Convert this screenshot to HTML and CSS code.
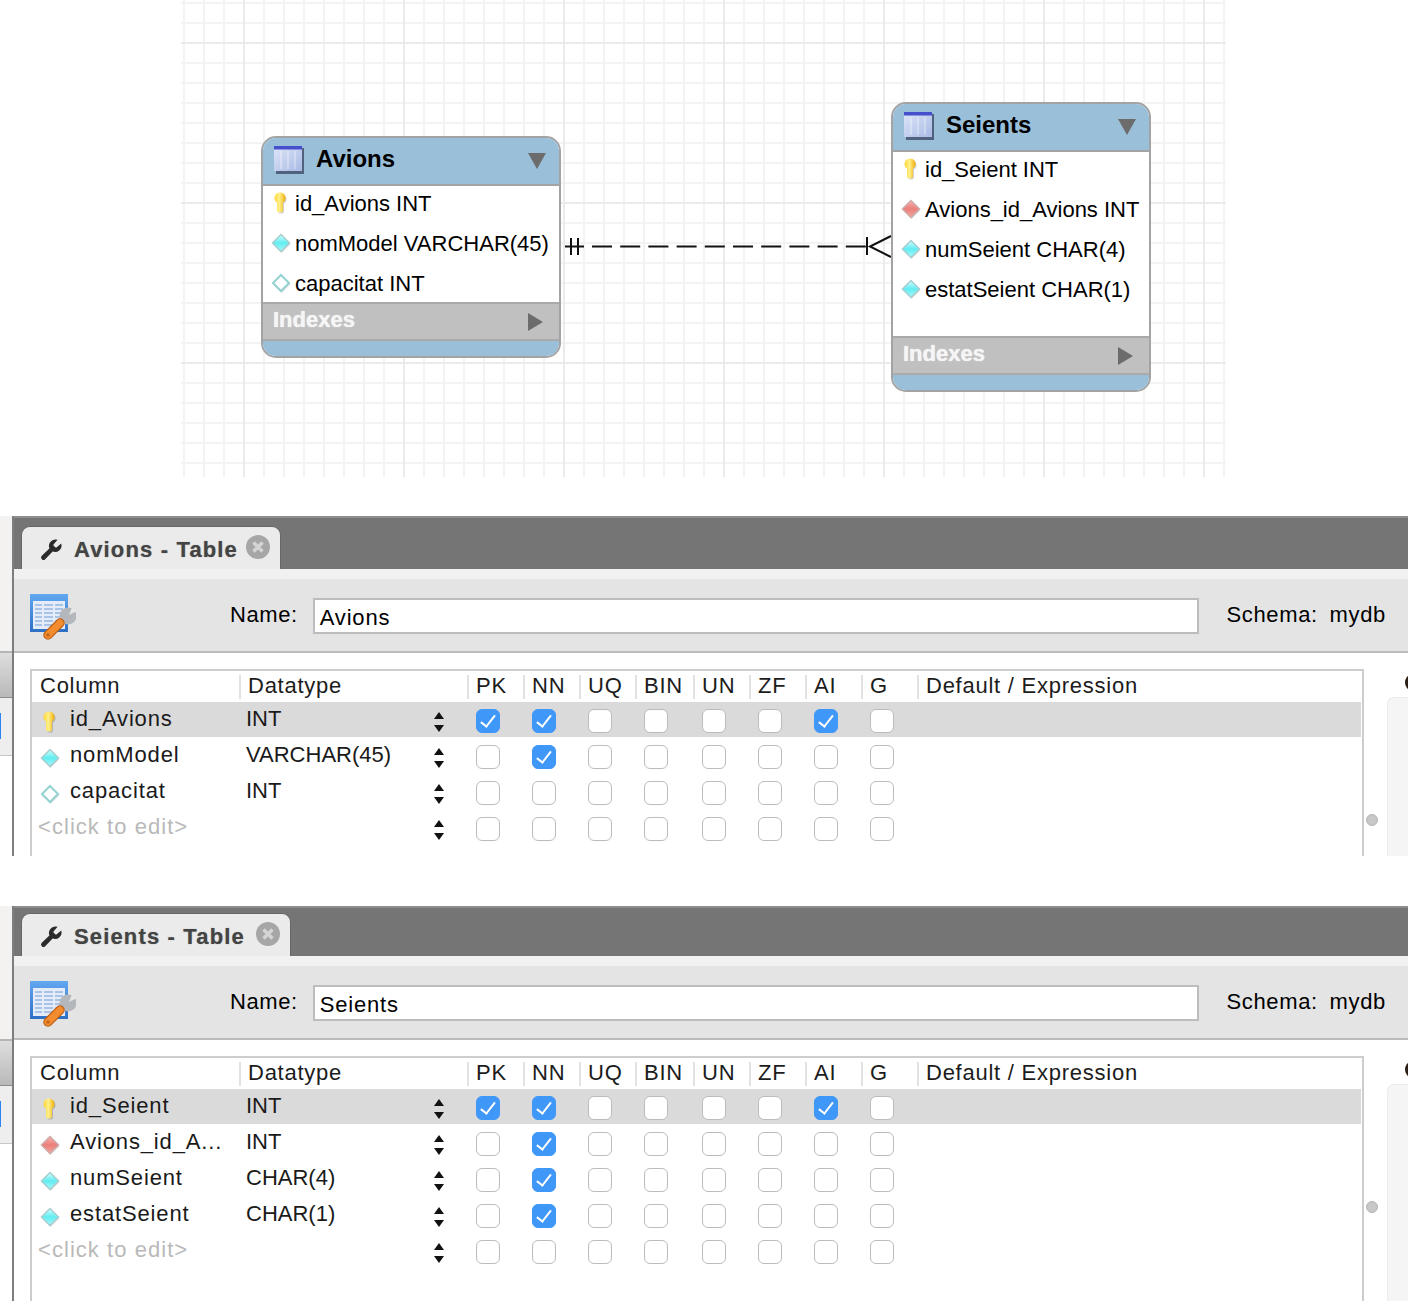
FILE: index.html
```html
<!DOCTYPE html>
<html lang="en">
<head>
    <meta charset="UTF-8">
    <title>MySQL Workbench - Avions / Seients</title>
    <link rel="stylesheet" href="styles.css">
</head>
<body>
    <!-- shared icons -->
    <svg class="defs" width="0" height="0">
        <defs>
            <linearGradient id="key-fill" x1="0" y1="0" x2="1" y2="0">
                <stop offset="0" stop-color="#ffd63c"/>
                <stop offset=".45" stop-color="#fff08a"/>
                <stop offset="1" stop-color="#f0ae0a"/>
            </linearGradient>
            <linearGradient id="col-fill" x1="0" y1="0" x2="0" y2="1">
                <stop offset="0" stop-color="#d4ffff"/>
                <stop offset=".5" stop-color="#62ecf0"/>
                <stop offset="1" stop-color="#a8fbfb"/>
            </linearGradient>
            <linearGradient id="fk-fill" x1="0" y1="0" x2="0" y2="1">
                <stop offset="0" stop-color="#f9b4ae"/>
                <stop offset=".5" stop-color="#ea7f7a"/>
                <stop offset="1" stop-color="#f6a8a2"/>
            </linearGradient>
            <linearGradient id="er-table-fill" x1="0" y1="0" x2="1" y2="1">
                <stop offset="0" stop-color="#dfe6f8"/>
                <stop offset="1" stop-color="#a7b9e4"/>
            </linearGradient>
            <linearGradient id="tool-blue" x1="0" y1="0" x2="0" y2="1">
                <stop offset="0" stop-color="#62a8f0"/>
                <stop offset="1" stop-color="#2d6fc4"/>
            </linearGradient>
            <symbol id="i-key" viewBox="-1 0 20 22">
                <path fill="#000" opacity=".18" d="M9 1.5a5.5 5.5 0 0 1 3 10.1V20l-1.5 1.5h-3L6 20v-8.4A5.5 5.5 0 0 1 9 1.5z"/>
                <path fill="url(#key-fill)" d="M8 .5a5.5 5.5 0 0 1 3 10.1V19l-1.5 1.5h-3L5 19v-8.4A5.5 5.5 0 0 1 8 .5z"/>
            </symbol>
            <symbol id="i-col" viewBox="0 0 20 20">
                <polygon points="10.6,2.4 19.4,11.2 10.6,20 1.8,11.2" fill="#000" opacity=".14"/>
                <polygon points="10,1.4 18.6,10 10,18.6 1.4,10" fill="url(#col-fill)" stroke="#a8cdd0" stroke-width="1.4"/>
            </symbol>
            <symbol id="i-col-empty" viewBox="0 0 20 20">
                <polygon points="10.6,2.4 19.4,11.2 10.6,20 1.8,11.2" fill="#000" opacity=".14"/>
                <polygon points="10,2 18,10 10,18 2,10" fill="#fff" stroke="#93d2d2" stroke-width="2"/>
            </symbol>
            <symbol id="i-fk" viewBox="0 0 20 20">
                <polygon points="10.6,2.4 19.4,11.2 10.6,20 1.8,11.2" fill="#000" opacity=".14"/>
                <polygon points="10,1.4 18.6,10 10,18.6 1.4,10" fill="url(#fk-fill)" stroke="#cfaaaa" stroke-width="1.4"/>
            </symbol>
            <symbol id="i-er-table" viewBox="0 0 30 28">
                <rect x="2" y="2" width="28" height="26" fill="#51627f"/>
                <rect x="0" y="0" width="28" height="25" fill="url(#er-table-fill)"/>
                <rect x="0" y="0" width="28" height="3.5" fill="#4650cc"/>
                <path d="M7 5v18M14 5v18M21 5v18" stroke="#fff" stroke-opacity=".4" stroke-width="1.5"/>
            </symbol>
            <symbol id="i-wrench" viewBox="0 0 24 24">
                <path fill="#2b2b2b" d="M14.7 6.3a1 1 0 0 0 0 1.4l1.6 1.6a1 1 0 0 0 1.4 0l4.5-3.9a6.6 6.6 0 0 1-8.6 8.2l-7.4 7.6a2.4 2.4 0 0 1-3.4-3.4l7.6-7.4a6.6 6.6 0 0 1 8.2-8.6l-3.9 4.5z"/>
            </symbol>
            <symbol id="i-close" viewBox="0 0 24 24">
                <circle cx="12" cy="12" r="12" fill="#a6a6a6"/>
                <path d="M7.5 7.5l9 9M16.5 7.5l-9 9" stroke="#d4d4d4" stroke-width="3.6"/>
            </symbol>
            <symbol id="i-tool" viewBox="0 0 46 46">
                <rect x="0" y="0" width="38" height="38" fill="url(#tool-blue)"/>
                <rect x="3" y="7" width="32" height="28" fill="#e4ecf9"/>
                <path d="M5 11h28M5 15h28M5 19h28M5 23h28M5 27h28M5 31h28" stroke="#a9c3e6" stroke-width="2"/>
                <path d="M13 7v28M24 7v28" stroke="#e4ecf9" stroke-width="2"/>
                <circle cx="38" cy="22" r="8.5" fill="#b4b7bb"/>
                <polygon points="39,21 42,13.5 46,17.5" fill="#e8e8e8"/>
                <path d="M18 41L30 29" stroke="#bd5f16" stroke-width="9.5" stroke-linecap="round"/>
                <path d="M18 41L30 29" stroke="#f28c2e" stroke-width="7" stroke-linecap="round"/>
                <circle cx="18" cy="41" r="1.8" fill="#c4651b"/>
            </symbol>
        </defs>
    </svg>

    <!-- EER diagram -->
    <div class="canvas">
        <svg class="relation" viewBox="181 0 1045 477">
            <path d="M565 246.5h19M571 238v17M578 238v17" stroke="#111" stroke-width="2" fill="none"/>
            <path d="M592 246.5H866" stroke="#111" stroke-width="2" stroke-dasharray="20 8.2" fill="none"/>
            <path d="M867 237v18M891 236L870 246.5L891 257" stroke="#111" stroke-width="2" fill="none"/>
        </svg>

        <div class="er-table er-avions">
            <div class="er-head">
                <svg class="er-icon"><use href="#i-er-table"/></svg>
                <span class="er-title">Avions</span>
                <span class="arrow-down"></span>
            </div>
            <div class="er-body">
                <div class="er-row"><svg class="er-col-icon"><use href="#i-key"/></svg>id_Avions INT</div>
                <div class="er-row"><svg class="er-col-icon"><use href="#i-col"/></svg>nomModel VARCHAR(45)</div>
                <div class="er-row"><svg class="er-col-icon"><use href="#i-col-empty"/></svg>capacitat INT</div>
            </div>
            <div class="er-indexes"><span>Indexes</span><span class="arrow-right"></span></div>
            <div class="er-foot"></div>
        </div>

        <div class="er-table er-seients">
            <div class="er-head">
                <svg class="er-icon"><use href="#i-er-table"/></svg>
                <span class="er-title">Seients</span>
                <span class="arrow-down"></span>
            </div>
            <div class="er-body">
                <div class="er-row"><svg class="er-col-icon"><use href="#i-key"/></svg>id_Seient INT</div>
                <div class="er-row"><svg class="er-col-icon"><use href="#i-fk"/></svg>Avions_id_Avions INT</div>
                <div class="er-row"><svg class="er-col-icon"><use href="#i-col"/></svg>numSeient CHAR(4)</div>
                <div class="er-row"><svg class="er-col-icon"><use href="#i-col"/></svg>estatSeient CHAR(1)</div>
            </div>
            <div class="er-indexes"><span>Indexes</span><span class="arrow-right"></span></div>
            <div class="er-foot"></div>
        </div>
    </div>

    <!-- Avions table editor -->
    <div class="panel panel-avions">
        <div class="rail">
            <div class="rail-top"></div>
            <div class="rail-grey"></div>
            <div class="rail-item"><span class="rail-blue"></span></div>
        </div>
        <div class="main">
            <div class="strip">
                <div class="tab">
                    <svg class="tab-wrench"><use href="#i-wrench"/></svg>
                    <span class="tab-title">Avions - Table</span>
                    <svg class="tab-close"><use href="#i-close"/></svg>
                </div>
            </div>
            <div class="toolbar">
                <svg class="tool-icon"><use href="#i-tool"/></svg>
                <span class="name-label">Name:</span>
                <div class="name-input">Avions</div>
                <span class="schema">Schema: <span class="schema-name">mydb</span></span>
            </div>
            <div class="content">
                <div class="grid-box">
                    <div class="cols grid-head">
                        <div class="th">Column</div><div class="th">Datatype</div><div class="th">PK</div><div class="th">NN</div><div class="th">UQ</div><div class="th">BIN</div><div class="th">UN</div><div class="th">ZF</div><div class="th">AI</div><div class="th">G</div><div class="th">Default / Expression</div>
                    </div>
                    <div class="cols grid-row selected">
                        <div class="td-name"><svg class="col-icon"><use href="#i-key"/></svg>id_Avions</div>
                        <div class="td-type">INT<span class="stepper"></span></div>
                        <div class="td-check"><span class="cb on"></span></div><div class="td-check"><span class="cb on"></span></div><div class="td-check"><span class="cb"></span></div><div class="td-check"><span class="cb"></span></div><div class="td-check"><span class="cb"></span></div><div class="td-check"><span class="cb"></span></div><div class="td-check"><span class="cb on"></span></div><div class="td-check"><span class="cb"></span></div>
                    </div>
                    <div class="cols grid-row">
                        <div class="td-name"><svg class="col-icon"><use href="#i-col"/></svg>nomModel</div>
                        <div class="td-type">VARCHAR(45)<span class="stepper"></span></div>
                        <div class="td-check"><span class="cb"></span></div><div class="td-check"><span class="cb on"></span></div><div class="td-check"><span class="cb"></span></div><div class="td-check"><span class="cb"></span></div><div class="td-check"><span class="cb"></span></div><div class="td-check"><span class="cb"></span></div><div class="td-check"><span class="cb"></span></div><div class="td-check"><span class="cb"></span></div>
                    </div>
                    <div class="cols grid-row">
                        <div class="td-name"><svg class="col-icon"><use href="#i-col-empty"/></svg>capacitat</div>
                        <div class="td-type">INT<span class="stepper"></span></div>
                        <div class="td-check"><span class="cb"></span></div><div class="td-check"><span class="cb"></span></div><div class="td-check"><span class="cb"></span></div><div class="td-check"><span class="cb"></span></div><div class="td-check"><span class="cb"></span></div><div class="td-check"><span class="cb"></span></div><div class="td-check"><span class="cb"></span></div><div class="td-check"><span class="cb"></span></div>
                    </div>
                    <div class="cols grid-row">
                        <div class="td-name td-new">&lt;click to edit&gt;</div>
                        <div class="td-type"><span class="stepper"></span></div>
                        <div class="td-check"><span class="cb"></span></div><div class="td-check"><span class="cb"></span></div><div class="td-check"><span class="cb"></span></div><div class="td-check"><span class="cb"></span></div><div class="td-check"><span class="cb"></span></div><div class="td-check"><span class="cb"></span></div><div class="td-check"><span class="cb"></span></div><div class="td-check"><span class="cb"></span></div>
                    </div>
                </div>
                <div class="gutter"><span class="dot"></span></div>
                <div class="side">
                    <div class="side-label"><span class="side-arc"></span></div>
                    <div class="side-box"></div>
                </div>
            </div>
        </div>
    </div>

    <!-- Seients table editor -->
    <div class="panel panel-seients">
        <div class="rail">
            <div class="rail-top"></div>
            <div class="rail-grey"></div>
            <div class="rail-item"><span class="rail-blue"></span></div>
        </div>
        <div class="main">
            <div class="strip">
                <div class="tab">
                    <svg class="tab-wrench"><use href="#i-wrench"/></svg>
                    <span class="tab-title">Seients - Table</span>
                    <svg class="tab-close"><use href="#i-close"/></svg>
                </div>
            </div>
            <div class="toolbar">
                <svg class="tool-icon"><use href="#i-tool"/></svg>
                <span class="name-label">Name:</span>
                <div class="name-input">Seients</div>
                <span class="schema">Schema: <span class="schema-name">mydb</span></span>
            </div>
            <div class="content">
                <div class="grid-box">
                    <div class="cols grid-head">
                        <div class="th">Column</div><div class="th">Datatype</div><div class="th">PK</div><div class="th">NN</div><div class="th">UQ</div><div class="th">BIN</div><div class="th">UN</div><div class="th">ZF</div><div class="th">AI</div><div class="th">G</div><div class="th">Default / Expression</div>
                    </div>
                    <div class="cols grid-row selected">
                        <div class="td-name"><svg class="col-icon"><use href="#i-key"/></svg>id_Seient</div>
                        <div class="td-type">INT<span class="stepper"></span></div>
                        <div class="td-check"><span class="cb on"></span></div><div class="td-check"><span class="cb on"></span></div><div class="td-check"><span class="cb"></span></div><div class="td-check"><span class="cb"></span></div><div class="td-check"><span class="cb"></span></div><div class="td-check"><span class="cb"></span></div><div class="td-check"><span class="cb on"></span></div><div class="td-check"><span class="cb"></span></div>
                    </div>
                    <div class="cols grid-row">
                        <div class="td-name"><svg class="col-icon"><use href="#i-fk"/></svg>Avions_id_A...</div>
                        <div class="td-type">INT<span class="stepper"></span></div>
                        <div class="td-check"><span class="cb"></span></div><div class="td-check"><span class="cb on"></span></div><div class="td-check"><span class="cb"></span></div><div class="td-check"><span class="cb"></span></div><div class="td-check"><span class="cb"></span></div><div class="td-check"><span class="cb"></span></div><div class="td-check"><span class="cb"></span></div><div class="td-check"><span class="cb"></span></div>
                    </div>
                    <div class="cols grid-row">
                        <div class="td-name"><svg class="col-icon"><use href="#i-col"/></svg>numSeient</div>
                        <div class="td-type">CHAR(4)<span class="stepper"></span></div>
                        <div class="td-check"><span class="cb"></span></div><div class="td-check"><span class="cb on"></span></div><div class="td-check"><span class="cb"></span></div><div class="td-check"><span class="cb"></span></div><div class="td-check"><span class="cb"></span></div><div class="td-check"><span class="cb"></span></div><div class="td-check"><span class="cb"></span></div><div class="td-check"><span class="cb"></span></div>
                    </div>
                    <div class="cols grid-row">
                        <div class="td-name"><svg class="col-icon"><use href="#i-col"/></svg>estatSeient</div>
                        <div class="td-type">CHAR(1)<span class="stepper"></span></div>
                        <div class="td-check"><span class="cb"></span></div><div class="td-check"><span class="cb on"></span></div><div class="td-check"><span class="cb"></span></div><div class="td-check"><span class="cb"></span></div><div class="td-check"><span class="cb"></span></div><div class="td-check"><span class="cb"></span></div><div class="td-check"><span class="cb"></span></div><div class="td-check"><span class="cb"></span></div>
                    </div>
                    <div class="cols grid-row">
                        <div class="td-name td-new">&lt;click to edit&gt;</div>
                        <div class="td-type"><span class="stepper"></span></div>
                        <div class="td-check"><span class="cb"></span></div><div class="td-check"><span class="cb"></span></div><div class="td-check"><span class="cb"></span></div><div class="td-check"><span class="cb"></span></div><div class="td-check"><span class="cb"></span></div><div class="td-check"><span class="cb"></span></div><div class="td-check"><span class="cb"></span></div><div class="td-check"><span class="cb"></span></div>
                    </div>
                </div>
                <div class="gutter"><span class="dot"></span></div>
                <div class="side">
                    <div class="side-label"><span class="side-arc"></span></div>
                    <div class="side-box"></div>
                </div>
            </div>
        </div>
    </div>
</body>
</html>
```

FILE: styles.css
```css
html, body {
    height: 1301px;
}

body {
    margin: 0;
    padding: 0;
    font-family: "Liberation Sans", Arial, sans-serif;
    font-size: 22px;
    color: #111;
    background: #fff;
    overflow: hidden;
}

.defs {
    position: absolute;
}

/* EER diagram canvas */
.canvas {
    position: relative;
    height: 477px;
    width: 1045px;
    margin-left: 181px;
    background-color: #fff;
    background-image:
        linear-gradient(90deg, #ebebeb 2px, transparent 2px),
        linear-gradient(#ebebeb 2px, transparent 2px),
        linear-gradient(90deg, #f3f3f3 2px, transparent 2px),
        linear-gradient(#f3f3f3 2px, transparent 2px);
    background-size: 160px 160px, 160px 160px, 20px 20px, 20px 20px;
    background-position: 62px 42px, 62px 42px, 2px 2px, 2px 2px;
}

.relation {
    position: absolute;
    top: 0;
    left: 0;
    width: 100%;
    height: 100%;
}

.er-table {
    position: absolute;
    box-sizing: border-box;
    border: 2px solid #a3a3a3;
    border-radius: 15px;
    overflow: hidden;
    background: #fff;
}

.er-avions {
    left: 80px;
    top: 136px;
    width: 300px;
}

.er-seients {
    left: 710px;
    top: 102px;
    width: 260px;
}

.er-head {
    display: flex;
    align-items: center;
    height: 46px;
    padding: 0 13px 0 11px;
    background: #9abfd9;
    border-bottom: 2px solid #a3a3a3;
}

.er-icon {
    width: 30px;
    height: 28px;
    margin-top: -2px;
}

.er-title {
    flex: 1;
    margin: 0 0 5px 12px;
    font-size: 24px;
    font-weight: bold;
    color: #000;
}

.arrow-down {
    width: 0;
    height: 0;
    border-left: 9px solid transparent;
    border-right: 9px solid transparent;
    border-top: 16px solid #6c6c6c;
}

.arrow-right {
    width: 0;
    height: 0;
    margin-top: 3px;
    border-top: 9px solid transparent;
    border-bottom: 9px solid transparent;
    border-left: 15px solid #6c6c6c;
}

.er-body {
    display: flex;
    flex-direction: column;
    gap: 5px;
    padding-bottom: 1px;
}

.er-seients .er-body {
    padding-bottom: 29px;
}

.er-row {
    display: flex;
    align-items: center;
    height: 35px;
    padding-left: 8px;
    color: #000;
    white-space: nowrap;
}

.er-col-icon {
    width: 20px;
    height: 22px;
    margin: -1px 4px 0 0;
    flex-shrink: 0;
}

.er-indexes {
    display: flex;
    align-items: center;
    justify-content: space-between;
    box-sizing: border-box;
    height: 39px;
    padding: 0 16px 3px 10px;
    background: #c0c0c0;
    border-top: 2px solid #a9a9a9;
    border-bottom: 2px solid #aaa;
    font-weight: bold;
    color: #f5f5f5;
    text-shadow: 0 0 1px #fff;
}

.er-foot {
    height: 15px;
    background: #9abfd9;
}

/* table editors */
.panel {
    display: flex;
    overflow: hidden;
}

.panel-avions {
    height: 340px;
    margin-top: 39px;
}

.panel-seients {
    height: 395px;
    margin-top: 50px;
}

.rail {
    display: flex;
    flex-direction: column;
    width: 12px;
    flex-shrink: 0;
}

.rail-top {
    height: 135px;
    background: #f4f2f1;
    border-bottom: 2px solid #b5b5b5;
}

.panel-seients .rail-top {
    height: 133px;
}

.rail-grey {
    height: 44px;
    background: linear-gradient(#dedede, #b9b9b9);
    border-bottom: 1px solid #8c8c8c;
}

.rail-item {
    display: flex;
    align-items: center;
    height: 57px;
    background: #eee;
    border-bottom: 1px solid #c6c6c6;
}

.rail-blue {
    width: 1px;
    height: 26px;
    margin-top: -2px;
    background: #2a86f0;
}

.main {
    display: flex;
    flex-direction: column;
    flex: 1;
    min-width: 0;
    border-left: 2px solid #7e7e7e;
}

.strip {
    display: flex;
    align-items: flex-end;
    box-sizing: border-box;
    height: 53px;
    padding-left: 7px;
    background: #757575;
    border-top: 2px solid #8e8e8e;
}

.panel-seients .strip {
    height: 50px;
}

.tab {
    display: flex;
    align-items: center;
    box-sizing: border-box;
    width: 260px;
    height: 43px;
    padding: 0 11px 0 17px;
    background: #ebebeb;
    border: 1px solid #666;
    border-bottom: none;
    border-radius: 9px 9px 0 0;
}

.panel-seients .tab {
    width: 270px;
}

.tab-wrench {
    width: 24px;
    height: 24px;
    margin-top: 4px;
    flex-shrink: 0;
}

.tab-title {
    flex: 1;
    margin: 3px 0 0 11px;
    font-weight: bold;
    letter-spacing: 1.15px;
    color: #444;
    text-shadow: 0 0 1px #888;
    white-space: nowrap;
}

.tab-close {
    width: 24px;
    height: 24px;
    margin: -3px -1px 0 0;
    flex-shrink: 0;
}

.toolbar {
    display: flex;
    align-items: center;
    height: 72px;
    padding: 0 22px 0 16px;
    background: #e4e4e4;
    border-top: 10px solid #f1f1f1;
    border-bottom: 2px solid #bbb;
    flex-shrink: 0;
}

.tool-icon {
    width: 46px;
    height: 46px;
    margin-top: 3px;
    flex-shrink: 0;
}

.name-label {
    margin-left: 154px;
    letter-spacing: .6px;
    color: #000;
}

.name-input {
    flex: 1;
    box-sizing: border-box;
    height: 36px;
    margin: 2px 0 0 15px;
    padding-left: 5px;
    background: #fff;
    border: 2px solid #bdbdbd;
    line-height: 35px;
    letter-spacing: .8px;
    color: #000;
}

.schema {
    margin-left: 27px;
    letter-spacing: .65px;
    color: #000;
}

.schema-name {
    margin-left: 5px;
}

.content {
    display: flex;
    flex: 1;
    min-height: 0;
    padding: 16px 0 0 16px;
}

.grid-box {
    box-sizing: border-box;
    width: 1334px;
    flex-shrink: 0;
    padding-right: 1px;
    border: solid #cdcdcd;
    border-width: 2px 2px 0 2px;
}

/* name, type, the eight flags, default */
.cols {
    display: grid;
    grid-template-columns: 207px 228px 56px 56px 56px 58px 56px 56px 56px 56px 1fr;
}

.grid-head {
    height: 31px;
    padding-top: 2px;
    box-sizing: border-box;
}

.th {
    box-sizing: border-box;
    height: 24px;
    padding-left: 7px;
    margin-top: 2px;
    border-left: 2px solid #e2e2e2;
    line-height: 22px;
    letter-spacing: .75px;
    color: #1c1c1c;
    white-space: nowrap;
}

.th:first-child {
    border-left: none;
    padding-left: 8px;
}

.grid-row {
    height: 35px;
    margin-bottom: 1px;
}

.selected {
    background: #dadada;
}

.td-name {
    display: flex;
    align-items: flex-start;
    padding-left: 8px;
    line-height: 34px;
    letter-spacing: .85px;
    color: #1a1a1a;
    white-space: nowrap;
}

.td-new {
    padding-left: 6px;
    letter-spacing: 1.05px;
    color: #b9b9b9;
}

.col-icon {
    width: 20px;
    height: 22px;
    margin: 9px 10px 0 0;
    flex-shrink: 0;
}

.td-type {
    display: flex;
    justify-content: space-between;
    padding: 0 23px 0 7px;
    line-height: 34px;
    color: #1a1a1a;
    white-space: nowrap;
}

.td-type .stepper {
    margin-left: auto;
}

.stepper {
    display: block;
    position: relative;
    width: 10px;
    height: 20px;
    margin-top: 10px;
}

.stepper::before,
.stepper::after {
    content: "";
    position: absolute;
    left: 0;
    border-left: 5px solid transparent;
    border-right: 5px solid transparent;
}

.stepper::before {
    top: 0;
    border-bottom: 7px solid #111;
}

.stepper::after {
    bottom: 0;
    border-top: 7px solid #111;
}

.td-check {
    padding: 7px 0 0 9px;
}

.cb {
    display: block;
    position: relative;
    box-sizing: border-box;
    width: 24px;
    height: 24px;
    background: #fff;
    border: 1.5px solid #bcbcbc;
    border-radius: 6px;
}

.cb.on {
    background: #3f97f8;
    border-color: #3f97f8;
}

.cb.on::after {
    content: "";
    position: absolute;
    left: 7px;
    top: 2px;
    width: 6px;
    height: 13px;
    border: solid #fff;
    border-width: 0 2.5px 2.5px 0;
    transform: rotate(38deg);
}

.gutter {
    width: 23px;
    flex-shrink: 0;
}

.dot {
    display: block;
    box-sizing: border-box;
    width: 12px;
    height: 12px;
    margin: 145px 0 0 2px;
    background: #c8c8c8;
    border: 1px solid #b4b4b4;
    border-radius: 50%;
}

.side {
    flex: 1;
    min-width: 0;
    overflow: hidden;
}

.side-label {
    height: 28px;
    padding: 6px 0 0 18px;
    box-sizing: border-box;
}

.side-arc {
    display: block;
    box-sizing: border-box;
    width: 12px;
    height: 15px;
    border-left: 3px solid #2a2018;
    border-radius: 50%;
}

.side-box {
    height: 300px;
    background: #f5f5f5;
    border-radius: 7px 0 0 0;
    border: solid #ececec;
    border-width: 1px 0 0 1px;
}
```
